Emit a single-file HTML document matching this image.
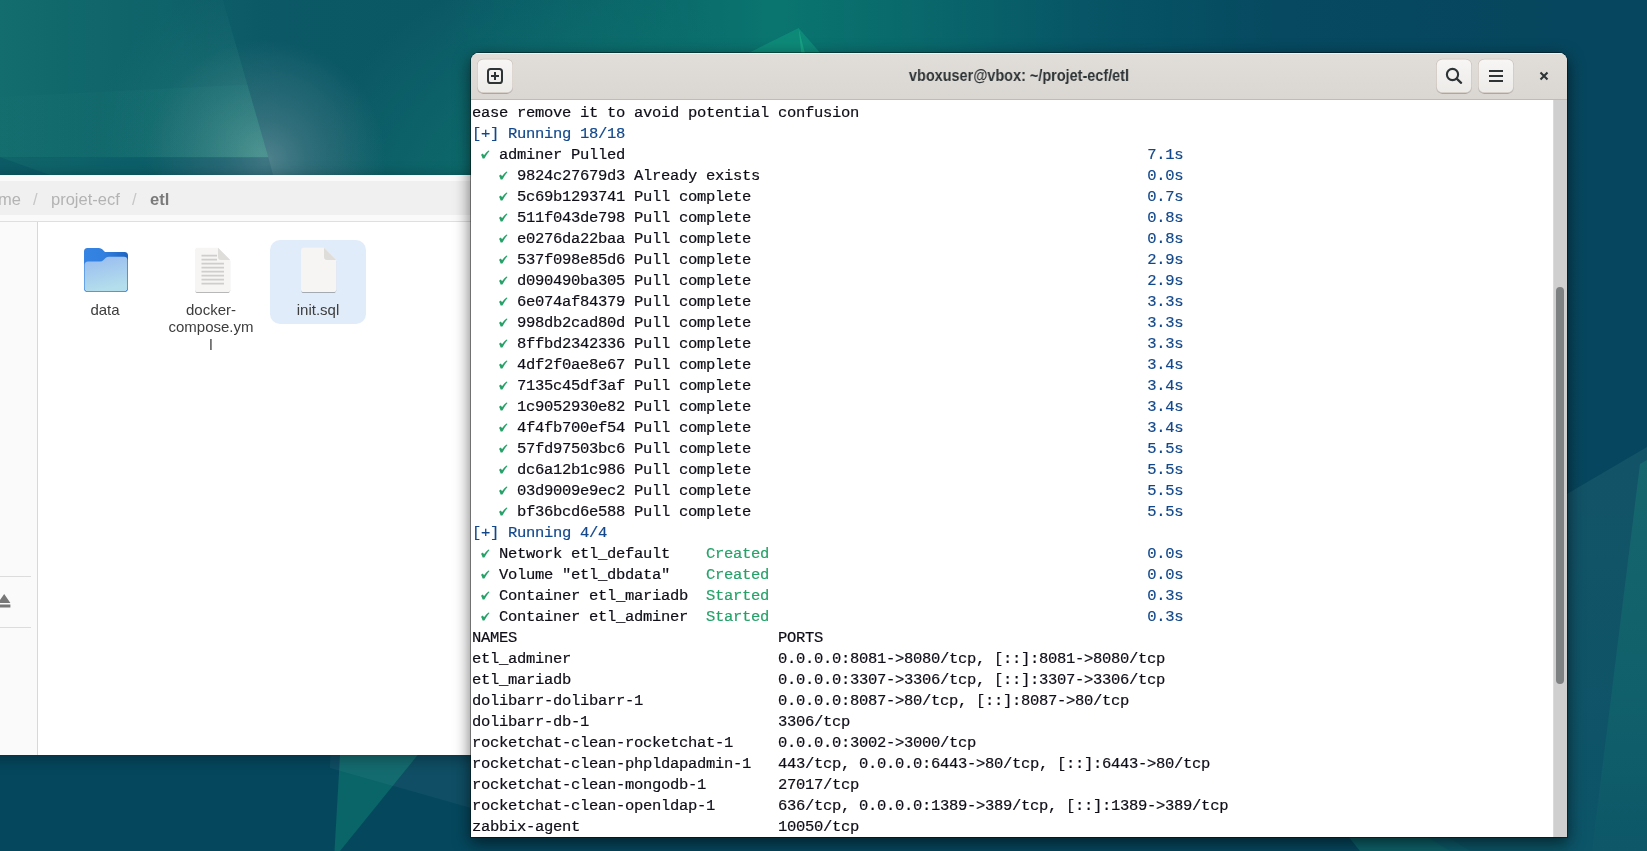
<!DOCTYPE html>
<html lang="en"><head><meta charset="utf-8"><title>Desktop</title>
<style>
html,body{margin:0;padding:0;background:#06465e;}
body{width:1647px;height:851px;overflow:hidden;font-family:"Liberation Sans",sans-serif;}
#desk{position:relative;width:1647px;height:851px;overflow:hidden;}
#wall{position:absolute;left:0;top:0;display:block;}
/* file manager */
#fm{position:absolute;left:-400px;top:175px;width:880px;height:580px;background:#fff;box-shadow:0 3px 14px rgba(0,0,0,.35);}
#fmtop{position:absolute;left:0;top:0;width:100%;height:46px;background:#fafafa;border-bottom:1px solid #dfdfdf;}
#fmpath{position:absolute;left:0;top:6px;width:100%;height:34px;background:#f0f0f0;}
#fmpath span{position:absolute;top:1px;height:34px;line-height:34px;font-size:16.5px;color:#b3b3b3;white-space:pre;will-change:transform;}
#fmside{position:absolute;left:0;top:47px;width:437px;bottom:0;background:#fafafa;border-right:1px solid #d8d8d8;}
.sep{position:absolute;left:400px;width:31px;height:1px;background:#dcdcdc;}
.ico{position:absolute;}
.lbl{position:absolute;will-change:transform;font-size:15px;line-height:17.3px;color:#3d3d3d;text-align:center;width:110px;}
#sel{position:absolute;left:670px;top:65px;width:96px;height:84px;border-radius:10px;background:#e1ecfa;}
/* terminal */
#term{position:absolute;left:471px;top:53px;width:1096px;height:784px;border-radius:8px 8px 0 0;background:#fff;box-shadow:0 0 0 1px rgba(0,0,0,.38),0 5px 16px 1px rgba(0,0,0,.55);overflow:hidden;}
#thead{position:absolute;left:0;top:0;width:100%;height:46px;background:linear-gradient(#e1deda,#dad6d2);border-bottom:1px solid #c2bbb4;box-shadow:inset 0 1px #f3f1ef;}
.hb{position:absolute;top:6px;width:33px;height:31px;border:1px solid #cbc5bf;border-radius:6px;background:linear-gradient(#f7f6f5,#edebe9);box-shadow:0 1px 1.5px rgba(0,0,0,.10);transform:translate(0.5px,0.3px);}
.hb svg{position:absolute;left:0.5px;top:-0.4px;}
#ttitle{position:absolute;left:0;top:0;width:100%;height:46px;line-height:45px;text-align:center;font-weight:bold;font-size:17px;color:#2e3436;will-change:transform;transform:scaleX(0.85);transform-origin:548px 0;}
#tbody{position:absolute;left:0;top:47px;right:0;bottom:0;background:#fff;}
#rows{position:absolute;left:1px;top:3px;will-change:transform;-webkit-text-stroke:0.2px;font-family:"Liberation Mono",monospace;font-size:15.5px;letter-spacing:-0.3px;color:#0f0d17;}
.r{height:21px;line-height:21px;white-space:pre;}
.b{color:#12488b;}
.g{color:#26a269;}
.ck{display:inline-block;width:9px;height:21px;vertical-align:top;}
.ck svg{display:block;}
#trough{position:absolute;right:0;top:0;width:13px;bottom:0;background:#cfcfcf;border-left:1px solid #dadada;}
#thumb{position:absolute;left:2px;top:187px;width:8px;height:397px;border-radius:4px;background:#7e8182;}

</style></head>
<body>
<div id="desk">
<svg id="wall" width="1647" height="851" viewBox="0 0 1647 851">
<defs>
<linearGradient id="gbase" x1="0" y1="0" x2="1" y2="0">
<stop offset="0" stop-color="#126c6c"/>
<stop offset="0.08" stop-color="#0e6469"/>
<stop offset="0.17" stop-color="#0c5866"/>
<stop offset="0.27" stop-color="#0b5865"/>
<stop offset="0.36" stop-color="#0a6469"/>
<stop offset="0.47" stop-color="#0a756f"/>
<stop offset="0.56" stop-color="#09686b"/>
<stop offset="0.66" stop-color="#075566"/>
<stop offset="0.78" stop-color="#064960"/>
<stop offset="1" stop-color="#06465e"/>
</linearGradient>
<radialGradient id="gglow" cx="266" cy="160" r="120" gradientUnits="userSpaceOnUse">
<stop offset="0" stop-color="#7d9ea6" stop-opacity="0.6"/>
<stop offset="0.35" stop-color="#6b929c" stop-opacity="0.38"/>
<stop offset="1" stop-color="#6b929c" stop-opacity="0"/>
</radialGradient>
<radialGradient id="gglow2" cx="262" cy="152" r="170" gradientUnits="userSpaceOnUse">
<stop offset="0" stop-color="#5aa89c" stop-opacity="0.5"/>
<stop offset="0.4" stop-color="#3f968c" stop-opacity="0.24"/>
<stop offset="1" stop-color="#2a8a80" stop-opacity="0"/>
</radialGradient>
<linearGradient id="gsub" x1="0" y1="0" x2="1" y2="0">
<stop offset="0" stop-color="#38a090" stop-opacity="0.02"/>
<stop offset="1" stop-color="#38a090" stop-opacity="0.10"/>
</linearGradient>
<clipPath id="cq"><polygon points="0,0 223,0 268.3,157.2 0,157.2"/></clipPath>
<linearGradient id="gr1" x1="0" y1="450" x2="0" y2="851" gradientUnits="userSpaceOnUse"><stop offset="0" stop-color="#135367"/><stop offset="1" stop-color="#0c5468"/></linearGradient>
<linearGradient id="gr2" x1="0" y1="460" x2="0" y2="851" gradientUnits="userSpaceOnUse"><stop offset="0" stop-color="#15666d"/><stop offset="0.6" stop-color="#10606b"/><stop offset="1" stop-color="#0d5768"/></linearGradient>
<radialGradient id="gmid" cx="560" cy="230" r="260" gradientUnits="userSpaceOnUse"><stop offset="0" stop-color="#0f7a70" stop-opacity="0.75"/><stop offset="0.45" stop-color="#0f7a70" stop-opacity="0.45"/><stop offset="1" stop-color="#0f7a70" stop-opacity="0"/></radialGradient>
</defs>
<rect width="1647" height="851" fill="url(#gbase)"/>
<rect x="280" y="0" width="560" height="260" fill="url(#gmid)"/>
<!-- glow behind quad -->
<rect x="100" y="20" width="380" height="160" fill="url(#gglow)"/>
<!-- top-left light quad -->
<g clip-path="url(#cq)">
<rect x="0" y="0" width="270" height="158" fill="#1b6c73" fill-opacity="0.10"/>
<rect x="0" y="0" width="270" height="158" fill="url(#gglow2)"/>
<polygon points="0,97 262,84 269,158 0,158" fill="url(#gsub)"/>
</g>
<polygon points="0,157.2 268.3,157.2 273,175 0,175" fill="#0a4c62" fill-opacity="0.22"/>
<polygon points="0,157.2 50,175 0,175" fill="#064a5e" fill-opacity="0.35"/>
<!-- top middle peak -->
<polygon points="748.6,53 798.6,28 820.2,53" fill="#0f8f7b" fill-opacity="0.8"/>
<polygon points="798.6,28 801.3,53 804.8,53" fill="#1aa886" fill-opacity="0.8"/>
<!-- bottom region -->
<rect x="0" y="740" width="1647" height="111" fill="#05475d"/>
<polygon points="340,755 417.7,755 340,851 334.5,851" fill="#0a6569"/>
<polygon points="330.4,755 471,755 471,808 330,768" fill="#ffffff" fill-opacity="0.042"/>
<polygon points="1335,820 1420,820 1470,851 1360,851" fill="#0f6a6c" fill-opacity="0.75"/>
<polygon points="1400,820 1567,820 1567,851 1450,851" fill="#0d5868" fill-opacity="0.8"/>
<!-- right region -->
<polygon points="1567,494 1647,447 1647,851 1567,851" fill="url(#gr1)"/>
<polygon points="1640,464 1647,460 1647,851 1592,851" fill="url(#gr2)"/>
</svg>

<div id="fm">
<div id="fmtop"><div id="fmpath">
<span style="left:398px">me</span>
<span style="left:433px;color:#c6c6c6">/</span>
<span style="left:451px">projet-ecf</span>
<span style="left:532px;color:#c6c6c6">/</span>
<span style="left:550px;color:#7a7a7a;font-weight:bold">etl</span>
</div></div>
<div id="fmside">
<div class="sep" style="top:354px"></div>
<div class="sep" style="top:405px"></div>
<svg style="position:absolute;left:398px;top:370.5px" width="14" height="16" viewBox="0 0 14 16"><path d="M0 10 L6.2 1 L12.4 10 Z M0 11.5h12.4v3H0z" fill="#777"/></svg>
</div>
<div id="sel"></div>
<!-- folder -->
<svg class="ico" style="left:483px;top:72px" width="46" height="46" viewBox="0 0 46 46">
<defs><linearGradient id="fg" x1="0" y1="0" x2="0.25" y2="1"><stop offset="0" stop-color="#98bbf0"/><stop offset="1" stop-color="#b4deec"/></linearGradient>
<linearGradient id="fb" x1="0" y1="0" x2="1" y2="0"><stop offset="0" stop-color="#3584e4"/><stop offset="0.45" stop-color="#3180df"/><stop offset="1" stop-color="#1f63c0"/></linearGradient></defs>
<path d="M1 4.5 Q1 1 4.5 1 H16 Q18 1 19.5 2.5 L22 5 H41.5 Q45 5 45 8.5 V41 Q45 45 41 45 H5 Q1 45 1 41 Z" fill="url(#fb)"/>
<path d="M1.6 18 Q1.6 14.5 5 14.5 H17 Q19 14.5 20.5 13 L22.5 11 Q24 9.8 26 9.8 H41 Q44.4 9.8 44.4 13.2 V41 Q44.4 44.4 41 44.4 H5 Q1.6 44.4 1.6 41 Z" fill="url(#fg)"/>
<path d="M1 40 V41 Q1 45 5 45 H41 Q45 45 45 41 V40 Q45 44.2 41 44.2 H5 Q1 44.2 1 40Z" fill="#4a8ad8" fill-opacity=".85"/>
</svg>
<!-- text doc -->
<svg class="ico" style="left:594px;top:71px" width="38" height="49" viewBox="0 0 38 49">
<defs><filter id="ds" x="-10%" y="-10%" width="120%" height="125%"><feGaussianBlur in="SourceAlpha" stdDeviation="0.7"/><feOffset dy="0.9"/><feComponentTransfer><feFuncA type="linear" slope="0.28"/></feComponentTransfer><feMerge><feMergeNode/><feMergeNode in="SourceGraphic"/></feMerge></filter></defs>
<g filter="url(#ds)">
<path d="M1 4.5 Q1 1.7 3.8 1.7 H24 L36.2 13.9 V43.2 Q36.2 46 33.4 46 H3.8 Q1 46 1 43.2 Z" fill="#f6f5f4"/>
</g>
<path d="M24 1.7 L36.2 13.9 H26.8 Q24 13.9 24 11.1 Z" fill="#deddda"/>
<path d="M7.5 9.7h15.5M7.5 13.7h15.5M7.5 17.7h22.5M7.5 21.7h22.5M7.5 25.7h22.5M7.5 29.7h22.5M7.5 33.7h22.5M7.5 37.7h22.5" stroke="#cfcecb" stroke-width="1.7"/>
</svg>
<!-- blank doc -->
<svg class="ico" style="left:700px;top:71px" width="38" height="49" viewBox="0 0 38 49">
<g filter="url(#ds)">
<path d="M1 4.5 Q1 1.7 3.8 1.7 H24 L36.2 13.9 V43.2 Q36.2 46 33.4 46 H3.8 Q1 46 1 43.2 Z" fill="#f6f5f4"/>
</g>
<path d="M24 1.7 L36.2 13.9 H26.8 Q24 13.9 24 11.1 Z" fill="#deddda"/>
</svg>
<div class="lbl" style="left:450px;top:126px">data</div>
<div class="lbl" style="left:556px;top:126px">docker-<br>compose.ym<br>l</div>
<div class="lbl" style="left:663px;top:126px">init.sql</div>
</div>

<div id="term">
<div id="thead">
<div id="ttitle">vboxuser@vbox: ~/projet-ecf/etl</div>
<svg id="hbtn" style="position:absolute;left:0;top:0" width="1096" height="46" viewBox="471 53 1096 46">
<defs><linearGradient id="bg1" x1="0" y1="0" x2="0" y2="1"><stop offset="0" stop-color="#f7f6f5"/><stop offset="1" stop-color="#ecebe8"/></linearGradient>
<filter id="bsh" x="-10%" y="-10%" width="120%" height="130%"><feGaussianBlur in="SourceAlpha" stdDeviation="0.6"/><feOffset dy="0.7"/><feComponentTransfer><feFuncA type="linear" slope="0.22"/></feComponentTransfer><feMerge><feMergeNode/><feMergeNode in="SourceGraphic"/></feMerge></filter></defs>
<g filter="url(#bsh)">
<rect x="477.1" y="58.8" width="35.9" height="34.1" rx="6.2" fill="#cfc5bc"/><rect x="477.7" y="59.4" width="34.7" height="32.9" rx="5.6" fill="url(#bg1)"/>
<rect x="1436.2" y="58.8" width="35.6" height="34.1" rx="6.2" fill="#cfc5bc"/><rect x="1436.8" y="59.4" width="34.4" height="32.9" rx="5.6" fill="url(#bg1)"/>
<rect x="1478.1" y="58.8" width="35.7" height="34.1" rx="6.2" fill="#cfc5bc"/><rect x="1478.7" y="59.4" width="34.5" height="32.9" rx="5.6" fill="url(#bg1)"/>
</g>
<g fill="none" stroke="#2e3436">
<rect x="488" y="69" width="14" height="14" rx="2.6" stroke-width="2"/>
<path d="M495 72v8M491 76h8" stroke-width="2"/>
<circle cx="1452.5" cy="74.5" r="5.6" stroke-width="2.1"/>
<path d="M1456.7 78.7l4.4 4.1" stroke-width="2.3" stroke-linecap="round"/>
<path d="M1489 71h14M1489 76h14M1489 81h14" stroke-width="2"/>
<path d="M1540.5 72.4l7 7M1547.5 72.4l-7 7" stroke-width="2.1"/>
</g>
</svg>
</div>

<div id="tbody">
<div id="rows">
<div class="r">ease remove it to avoid potential confusion</div>
<div class="r"><span class="b">[+] Running 18/18</span></div>
<div class="r"> <span class="ck"><svg viewBox="0 0 9 21" width="9" height="21"><path transform="translate(0,-2.1)" d="M0.0 11.9 L1.9 10.6 L3.0 12.3 Q5.2 9.2 7.5 7.6 L8.5 8.2 Q5.5 11.5 3.4 15.5 L1.6 15.5 Q1.0 13.5 0.0 11.9 Z" fill="#26a269"/></svg></span> adminer Pulled                                                          <span class="b">7.1s</span></div>
<div class="r">   <span class="ck"><svg viewBox="0 0 9 21" width="9" height="21"><path transform="translate(0,-2.1)" d="M0.0 11.9 L1.9 10.6 L3.0 12.3 Q5.2 9.2 7.5 7.6 L8.5 8.2 Q5.5 11.5 3.4 15.5 L1.6 15.5 Q1.0 13.5 0.0 11.9 Z" fill="#26a269"/></svg></span> 9824c27679d3 Already exists                                           <span class="b">0.0s</span></div>
<div class="r">   <span class="ck"><svg viewBox="0 0 9 21" width="9" height="21"><path transform="translate(0,-2.1)" d="M0.0 11.9 L1.9 10.6 L3.0 12.3 Q5.2 9.2 7.5 7.6 L8.5 8.2 Q5.5 11.5 3.4 15.5 L1.6 15.5 Q1.0 13.5 0.0 11.9 Z" fill="#26a269"/></svg></span> 5c69b1293741 Pull complete                                            <span class="b">0.7s</span></div>
<div class="r">   <span class="ck"><svg viewBox="0 0 9 21" width="9" height="21"><path transform="translate(0,-2.1)" d="M0.0 11.9 L1.9 10.6 L3.0 12.3 Q5.2 9.2 7.5 7.6 L8.5 8.2 Q5.5 11.5 3.4 15.5 L1.6 15.5 Q1.0 13.5 0.0 11.9 Z" fill="#26a269"/></svg></span> 511f043de798 Pull complete                                            <span class="b">0.8s</span></div>
<div class="r">   <span class="ck"><svg viewBox="0 0 9 21" width="9" height="21"><path transform="translate(0,-2.1)" d="M0.0 11.9 L1.9 10.6 L3.0 12.3 Q5.2 9.2 7.5 7.6 L8.5 8.2 Q5.5 11.5 3.4 15.5 L1.6 15.5 Q1.0 13.5 0.0 11.9 Z" fill="#26a269"/></svg></span> e0276da22baa Pull complete                                            <span class="b">0.8s</span></div>
<div class="r">   <span class="ck"><svg viewBox="0 0 9 21" width="9" height="21"><path transform="translate(0,-2.1)" d="M0.0 11.9 L1.9 10.6 L3.0 12.3 Q5.2 9.2 7.5 7.6 L8.5 8.2 Q5.5 11.5 3.4 15.5 L1.6 15.5 Q1.0 13.5 0.0 11.9 Z" fill="#26a269"/></svg></span> 537f098e85d6 Pull complete                                            <span class="b">2.9s</span></div>
<div class="r">   <span class="ck"><svg viewBox="0 0 9 21" width="9" height="21"><path transform="translate(0,-2.1)" d="M0.0 11.9 L1.9 10.6 L3.0 12.3 Q5.2 9.2 7.5 7.6 L8.5 8.2 Q5.5 11.5 3.4 15.5 L1.6 15.5 Q1.0 13.5 0.0 11.9 Z" fill="#26a269"/></svg></span> d090490ba305 Pull complete                                            <span class="b">2.9s</span></div>
<div class="r">   <span class="ck"><svg viewBox="0 0 9 21" width="9" height="21"><path transform="translate(0,-2.1)" d="M0.0 11.9 L1.9 10.6 L3.0 12.3 Q5.2 9.2 7.5 7.6 L8.5 8.2 Q5.5 11.5 3.4 15.5 L1.6 15.5 Q1.0 13.5 0.0 11.9 Z" fill="#26a269"/></svg></span> 6e074af84379 Pull complete                                            <span class="b">3.3s</span></div>
<div class="r">   <span class="ck"><svg viewBox="0 0 9 21" width="9" height="21"><path transform="translate(0,-2.1)" d="M0.0 11.9 L1.9 10.6 L3.0 12.3 Q5.2 9.2 7.5 7.6 L8.5 8.2 Q5.5 11.5 3.4 15.5 L1.6 15.5 Q1.0 13.5 0.0 11.9 Z" fill="#26a269"/></svg></span> 998db2cad80d Pull complete                                            <span class="b">3.3s</span></div>
<div class="r">   <span class="ck"><svg viewBox="0 0 9 21" width="9" height="21"><path transform="translate(0,-2.1)" d="M0.0 11.9 L1.9 10.6 L3.0 12.3 Q5.2 9.2 7.5 7.6 L8.5 8.2 Q5.5 11.5 3.4 15.5 L1.6 15.5 Q1.0 13.5 0.0 11.9 Z" fill="#26a269"/></svg></span> 8ffbd2342336 Pull complete                                            <span class="b">3.3s</span></div>
<div class="r">   <span class="ck"><svg viewBox="0 0 9 21" width="9" height="21"><path transform="translate(0,-2.1)" d="M0.0 11.9 L1.9 10.6 L3.0 12.3 Q5.2 9.2 7.5 7.6 L8.5 8.2 Q5.5 11.5 3.4 15.5 L1.6 15.5 Q1.0 13.5 0.0 11.9 Z" fill="#26a269"/></svg></span> 4df2f0ae8e67 Pull complete                                            <span class="b">3.4s</span></div>
<div class="r">   <span class="ck"><svg viewBox="0 0 9 21" width="9" height="21"><path transform="translate(0,-2.1)" d="M0.0 11.9 L1.9 10.6 L3.0 12.3 Q5.2 9.2 7.5 7.6 L8.5 8.2 Q5.5 11.5 3.4 15.5 L1.6 15.5 Q1.0 13.5 0.0 11.9 Z" fill="#26a269"/></svg></span> 7135c45df3af Pull complete                                            <span class="b">3.4s</span></div>
<div class="r">   <span class="ck"><svg viewBox="0 0 9 21" width="9" height="21"><path transform="translate(0,-2.1)" d="M0.0 11.9 L1.9 10.6 L3.0 12.3 Q5.2 9.2 7.5 7.6 L8.5 8.2 Q5.5 11.5 3.4 15.5 L1.6 15.5 Q1.0 13.5 0.0 11.9 Z" fill="#26a269"/></svg></span> 1c9052930e82 Pull complete                                            <span class="b">3.4s</span></div>
<div class="r">   <span class="ck"><svg viewBox="0 0 9 21" width="9" height="21"><path transform="translate(0,-2.1)" d="M0.0 11.9 L1.9 10.6 L3.0 12.3 Q5.2 9.2 7.5 7.6 L8.5 8.2 Q5.5 11.5 3.4 15.5 L1.6 15.5 Q1.0 13.5 0.0 11.9 Z" fill="#26a269"/></svg></span> 4f4fb700ef54 Pull complete                                            <span class="b">3.4s</span></div>
<div class="r">   <span class="ck"><svg viewBox="0 0 9 21" width="9" height="21"><path transform="translate(0,-2.1)" d="M0.0 11.9 L1.9 10.6 L3.0 12.3 Q5.2 9.2 7.5 7.6 L8.5 8.2 Q5.5 11.5 3.4 15.5 L1.6 15.5 Q1.0 13.5 0.0 11.9 Z" fill="#26a269"/></svg></span> 57fd97503bc6 Pull complete                                            <span class="b">5.5s</span></div>
<div class="r">   <span class="ck"><svg viewBox="0 0 9 21" width="9" height="21"><path transform="translate(0,-2.1)" d="M0.0 11.9 L1.9 10.6 L3.0 12.3 Q5.2 9.2 7.5 7.6 L8.5 8.2 Q5.5 11.5 3.4 15.5 L1.6 15.5 Q1.0 13.5 0.0 11.9 Z" fill="#26a269"/></svg></span> dc6a12b1c986 Pull complete                                            <span class="b">5.5s</span></div>
<div class="r">   <span class="ck"><svg viewBox="0 0 9 21" width="9" height="21"><path transform="translate(0,-2.1)" d="M0.0 11.9 L1.9 10.6 L3.0 12.3 Q5.2 9.2 7.5 7.6 L8.5 8.2 Q5.5 11.5 3.4 15.5 L1.6 15.5 Q1.0 13.5 0.0 11.9 Z" fill="#26a269"/></svg></span> 03d9009e9ec2 Pull complete                                            <span class="b">5.5s</span></div>
<div class="r">   <span class="ck"><svg viewBox="0 0 9 21" width="9" height="21"><path transform="translate(0,-2.1)" d="M0.0 11.9 L1.9 10.6 L3.0 12.3 Q5.2 9.2 7.5 7.6 L8.5 8.2 Q5.5 11.5 3.4 15.5 L1.6 15.5 Q1.0 13.5 0.0 11.9 Z" fill="#26a269"/></svg></span> bf36bcd6e588 Pull complete                                            <span class="b">5.5s</span></div>
<div class="r"><span class="b">[+] Running 4/4</span></div>
<div class="r"> <span class="ck"><svg viewBox="0 0 9 21" width="9" height="21"><path transform="translate(0,-2.1)" d="M0.0 11.9 L1.9 10.6 L3.0 12.3 Q5.2 9.2 7.5 7.6 L8.5 8.2 Q5.5 11.5 3.4 15.5 L1.6 15.5 Q1.0 13.5 0.0 11.9 Z" fill="#26a269"/></svg></span> Network etl_default    <span class="g">Created</span>                                          <span class="b">0.0s</span></div>
<div class="r"> <span class="ck"><svg viewBox="0 0 9 21" width="9" height="21"><path transform="translate(0,-2.1)" d="M0.0 11.9 L1.9 10.6 L3.0 12.3 Q5.2 9.2 7.5 7.6 L8.5 8.2 Q5.5 11.5 3.4 15.5 L1.6 15.5 Q1.0 13.5 0.0 11.9 Z" fill="#26a269"/></svg></span> Volume "etl_dbdata"    <span class="g">Created</span>                                          <span class="b">0.0s</span></div>
<div class="r"> <span class="ck"><svg viewBox="0 0 9 21" width="9" height="21"><path transform="translate(0,-2.1)" d="M0.0 11.9 L1.9 10.6 L3.0 12.3 Q5.2 9.2 7.5 7.6 L8.5 8.2 Q5.5 11.5 3.4 15.5 L1.6 15.5 Q1.0 13.5 0.0 11.9 Z" fill="#26a269"/></svg></span> Container etl_mariadb  <span class="g">Started</span>                                          <span class="b">0.3s</span></div>
<div class="r"> <span class="ck"><svg viewBox="0 0 9 21" width="9" height="21"><path transform="translate(0,-2.1)" d="M0.0 11.9 L1.9 10.6 L3.0 12.3 Q5.2 9.2 7.5 7.6 L8.5 8.2 Q5.5 11.5 3.4 15.5 L1.6 15.5 Q1.0 13.5 0.0 11.9 Z" fill="#26a269"/></svg></span> Container etl_adminer  <span class="g">Started</span>                                          <span class="b">0.3s</span></div>
<div class="r">NAMES                             PORTS</div>
<div class="r">etl_adminer                       0.0.0.0:8081-&gt;8080/tcp, [::]:8081-&gt;8080/tcp</div>
<div class="r">etl_mariadb                       0.0.0.0:3307-&gt;3306/tcp, [::]:3307-&gt;3306/tcp</div>
<div class="r">dolibarr-dolibarr-1               0.0.0.0:8087-&gt;80/tcp, [::]:8087-&gt;80/tcp</div>
<div class="r">dolibarr-db-1                     3306/tcp</div>
<div class="r">rocketchat-clean-rocketchat-1     0.0.0.0:3002-&gt;3000/tcp</div>
<div class="r">rocketchat-clean-phpldapadmin-1   443/tcp, 0.0.0.0:6443-&gt;80/tcp, [::]:6443-&gt;80/tcp</div>
<div class="r">rocketchat-clean-mongodb-1        27017/tcp</div>
<div class="r">rocketchat-clean-openldap-1       636/tcp, 0.0.0.0:1389-&gt;389/tcp, [::]:1389-&gt;389/tcp</div>
<div class="r">zabbix-agent                      10050/tcp</div>
</div>
<div id="trough"><div id="thumb"></div></div>
</div>
</div>
</div>
</body></html>
